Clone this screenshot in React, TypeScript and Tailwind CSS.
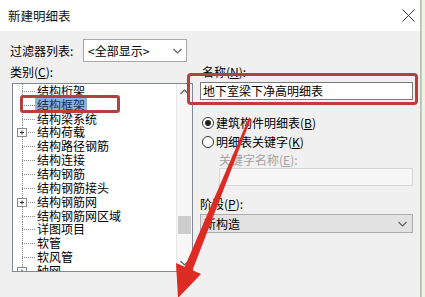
import React from 'react';

const TREE_ITEMS = [
    { name: '结构桁架', plus: false },
    { name: '结构框架', plus: false, selected: true },
    { name: '结构梁系统', plus: false },
    { name: '结构荷载', plus: true },
    { name: '结构路径钢筋', plus: false },
    { name: '结构连接', plus: false },
    { name: '结构钢筋', plus: false },
    { name: '结构钢筋接头', plus: false },
    { name: '结构钢筋网', plus: true },
    { name: '结构钢筋网区域', plus: false },
    { name: '详图项目', plus: false },
    { name: '软管', plus: false },
    { name: '软风管', plus: false },
    { name: '轴网', plus: true },
];

function Chevron({ up = false, className = '' }: { up?: boolean; className?: string }) {
    return (
        <svg width="9" height="6" viewBox="0 0 9 6" className={className}>
            <polyline
                points={up ? '0.5,5 4.5,1 8.5,5' : '0.5,1 4.5,5 8.5,1'}
                fill="none"
                stroke="#606060"
                strokeWidth="1.2"
            />
        </svg>
    );
}

function TreeGuide({ plus }: { plus: boolean }) {
    // dotted connector lines of the tree view
    return (
        <svg width="24" height="14" viewBox="0 0 24 14" className="shrink-0">
            <line x1="9.5" y1="0" x2="9.5" y2="14" stroke="#8a8a8a" strokeDasharray="1 1" />
            <line x1="9" y1="7.5" x2="23" y2="7.5" stroke="#8a8a8a" strokeDasharray="1 1" />
            {plus && (
                <g>
                    <rect x="4.5" y="3.5" width="9" height="8" fill="#fff" stroke="#8a8a8a" />
                    <line x1="7" y1="7.5" x2="11" y2="7.5" stroke="#333" />
                    <line x1="9" y1="5.5" x2="9" y2="9.5" stroke="#333" />
                </g>
            )}
        </svg>
    );
}

function Radio({ checked }: { checked: boolean }) {
    return (
        <span className="w-[12px] h-[12px] rounded-full border border-[#333] bg-white flex items-center justify-center shrink-0">
            {checked && <span className="w-[6px] h-[6px] rounded-full bg-[#222]" />}
        </span>
    );
}

export default function App() {
    return (
        <div className="relative w-[425px] h-[297px] overflow-hidden flex bg-[#f0f0f0] text-[12px] leading-[16px] text-black font-['Noto_Sans_CJK_SC',sans-serif]">
            {/* Dialog */}
            <div className="w-[421px] h-full flex flex-col border-r border-[#b9c2b0]">
                {/* Title bar */}
                <div className="h-[31px] bg-white flex items-center justify-between pl-[8px] pr-[6px] shrink-0">
                    <span className="text-[12.5px] text-[#111]">新建明细表</span>
                    <svg width="13" height="13" viewBox="0 0 13 13" className="mr-[-1px]">
                        <line x1="0.5" y1="0.5" x2="12.5" y2="12.5" stroke="#333" strokeWidth="1" />
                        <line x1="12.5" y1="0.5" x2="0.5" y2="12.5" stroke="#333" strokeWidth="1" />
                    </svg>
                </div>

                {/* Body */}
                <div className="flex-1 pl-[10px] pt-[8px] flex flex-col">
                    {/* Filter row */}
                    <div className="flex items-center h-[23px]">
                        <span className="w-[73px]">过滤器列表:</span>
                        <div className="w-[104px] h-[23px] bg-white border border-[#a8a8a8] flex items-center justify-between pl-[4px] pr-[4px]">
                            <span>&lt;全部显示&gt;</span>
                            <Chevron />
                        </div>
                    </div>

                    <div className="flex gap-[7px] mt-[2px]">
                        {/* Left column: categories */}
                        <div className="w-[183px] flex flex-col">
                            <span className="h-[16px]">
                                类别(<span className="underline">C</span>):
                            </span>
                            <div className="ml-[2px] mt-[3px] w-[181px] h-[189px] bg-white border border-[#828790] flex overflow-hidden">
                                <div className="flex-1 flex flex-col">
                                    {TREE_ITEMS.map((item) => (
                                        <div key={item.name} className="h-[13.85px] leading-[14px] flex items-center shrink-0 overflow-visible">
                                            <TreeGuide plus={item.plus} />
                                            <span
                                                className={
                                                    item.selected
                                                        ? 'ml-[-2px] px-[2px] h-[15px] leading-[15px] bg-[#8fb0dc] text-[#15305a]'
                                                        : 'whitespace-nowrap'
                                                }
                                            >
                                                {item.name}
                                            </span>
                                        </div>
                                    ))}
                                </div>
                                {/* Scrollbar */}
                                <div className="w-[16px] bg-[#f7f7f7] border-l border-[#e8e8e8] flex flex-col items-center">
                                    <div className="h-[16px] flex items-center justify-center">
                                        <Chevron up />
                                    </div>
                                    <div className="flex-1 w-full flex flex-col">
                                        <div className="h-[116px]" />
                                        <div className="h-[18px] mx-[1px] bg-[#cdcdcd]" />
                                    </div>
                                    <div className="h-[16px] flex items-center justify-center">
                                        <Chevron />
                                    </div>
                                </div>
                            </div>
                        </div>

                        {/* Right column */}
                        <div className="w-[213px] flex flex-col">
                            <span className="h-[16px] pl-[2px]">
                                名称(<span className="underline">N</span>):
                            </span>
                            <div className="mt-[2px] h-[18px] bg-white border border-[#7a7a7a] flex items-center pl-[2px]">
                                地下室梁下净高明细表
                            </div>

                            <div className="mt-[15px] h-[16px] flex items-center gap-[2px] pl-[2px]">
                                <Radio checked />
                                <span>
                                    建筑构件明细表(<span className="underline">B</span>)
                                </span>
                            </div>
                            <div className="mt-[3px] h-[16px] flex items-center gap-[2px] pl-[2px]">
                                <Radio checked={false} />
                                <span>
                                    明细表关键字(<span className="underline">K</span>)
                                </span>
                            </div>
                            <span className="mt-[2px] h-[16px] pl-[19px] text-[#a3a3a3]">
                                关键字名称(<span className="underline">E</span>):
                            </span>
                            <div className="ml-[19px] h-[18px] bg-[#f6f6f6] border border-[#d6d6d6]" />

                            <span className="mt-[10px] h-[16px]">
                                阶段(<span className="underline">P</span>):
                            </span>
                            <div className="mt-[2px] h-[19px] bg-[#e2e2e2] border border-[#adadad] flex items-center justify-between pl-[3px] pr-[5px]">
                                <span>新构造</span>
                                <Chevron />
                            </div>
                        </div>
                    </div>
                </div>
            </div>
            <div className="flex-1 bg-[#eef3e6] border-l border-[#c3d1b0]" />

            {/* Annotation overlays */}
            <div className="absolute left-[20px] top-[95px] w-[100px] h-[18px] border-[3px] border-[#b5413f] rounded-[3px]" />
            <div className="absolute left-[187px] top-[73px] w-[231px] h-[32px] border-[3px] border-[#b5413f] rounded-[4px]" />
            <svg className="absolute inset-0 pointer-events-none" width="425" height="297" viewBox="0 0 425 297">
                <polygon points="249,117.5 251,118.5 192,271.6 184,268.4" fill="#dd2a22" />
                <polygon points="178,298 176,263 201,274" fill="#dd2a22" />
            </svg>
        </div>
    );
}
